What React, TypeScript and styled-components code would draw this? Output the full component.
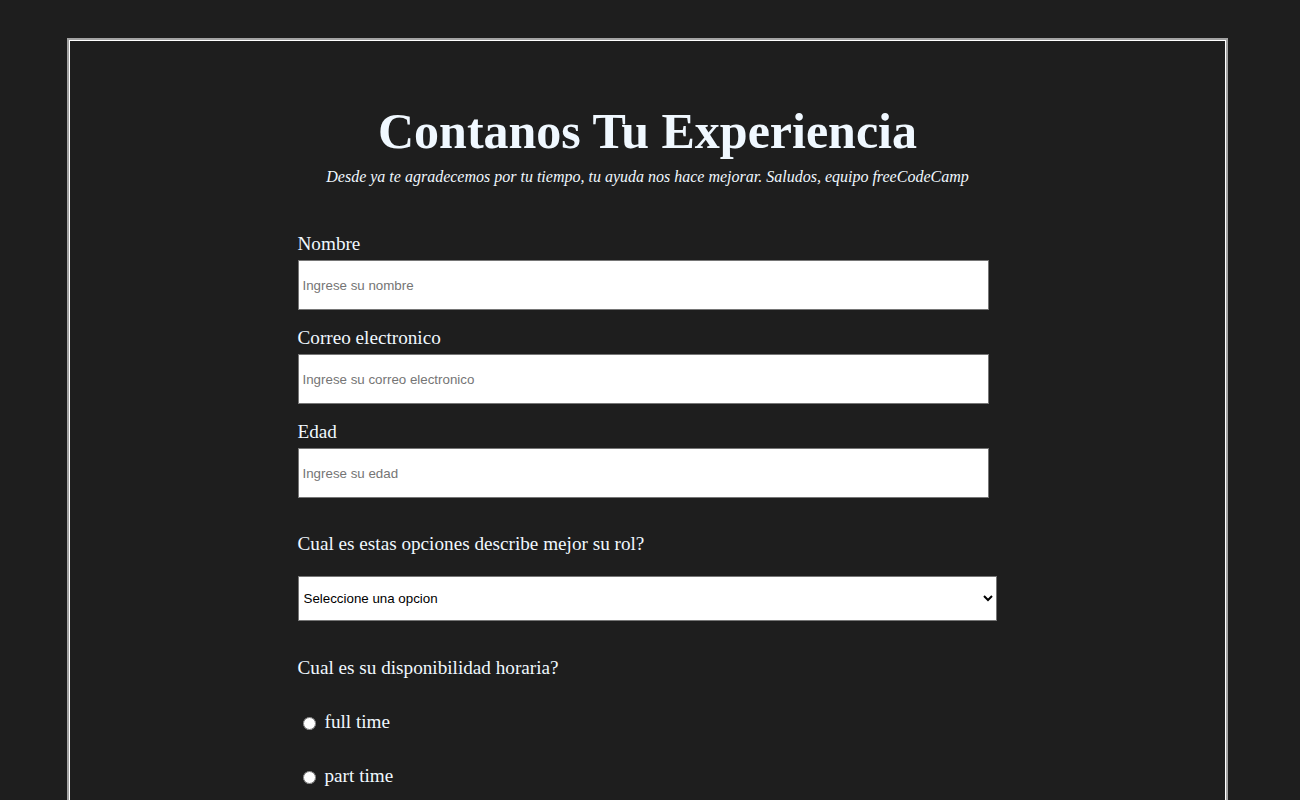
import React from "react";
import styled, { createGlobalStyle } from "styled-components";

const Global = createGlobalStyle`
  html, body { margin: 0; padding: 0; }
  body {
    background: #1e1e1e;
    font-family: "Liberation Serif", "Times New Roman", serif;
    color: #f0f8ff;
  }
`;

const Page = styled.div`
  padding: 38px 72px 40px 67px;
`;

const Frame = styled.main`
  border: 2px solid #a3a3a3;
  box-shadow: inset 0 0 0 1px #ffffff;
  padding: 60px 0 40px;
  display: flex;
  flex-direction: column;
  align-items: center;
`;

const Title = styled.h1`
  margin: 0;
  font-size: 50px;
  font-weight: bold;
  line-height: 62px;
  text-align: center;
`;

const Subtitle = styled.p`
  margin: 6px 0 0;
  font-size: 16px;
  font-style: italic;
  text-align: center;
`;

const Form = styled.form`
  width: 699px;
  margin: 47px 0 0 -1px;
  display: flex;
  flex-direction: column;
`;

const Field = styled.div`
  display: flex;
  flex-direction: column;
  margin-bottom: 17px;
`;

const Label = styled.label`
  font-size: 19.2px;
  line-height: 22px;
  margin-bottom: 5px;
`;

const Input = styled.input`
  box-sizing: border-box;
  width: 691px;
  height: 50px;
  border: 1px solid #767676;
  padding: 0 4px;
  font-family: "Liberation Sans", Arial, sans-serif;
  font-size: 13.33px;
  background: #fff;
  color: #000;
  &::placeholder { color: #757575; }
`;

const Question = styled.p`
  margin: 0;
  font-size: 19.2px;
  line-height: 22px;
`;

const Select = styled.select`
  box-sizing: border-box;
  width: 699px;
  height: 45px;
  border: 1px solid #767676;
  padding: 0 1px;
  font-family: "Liberation Sans", Arial, sans-serif;
  font-size: 13.33px;
  background: #fff;
  color: #000;
`;

const Block = styled.div<{ $top: number; $gap: number }>`
  display: flex;
  flex-direction: column;
  margin-top: ${(p) => p.$top}px;
  gap: ${(p) => p.$gap}px;
`;

const RadioRow = styled.label`
  display: flex;
  align-items: center;
  gap: 9px;
  font-size: 19.2px;
  line-height: 22px;
  padding-left: 5px;
`;

const Radio = styled.input`
  margin: 3px 0 0;
  width: 13px;
  height: 13px;
`;

export default function App() {
  return (
    <>
      <Global />
      <Page>
        <Frame>
          <Title>Contanos Tu Experiencia</Title>
          <Subtitle>
            Desde ya te agradecemos por tu tiempo, tu ayuda nos hace mejorar. Saludos, equipo freeCodeCamp
          </Subtitle>
          <Form>
            <Field>
              <Label htmlFor="name">Nombre</Label>
              <Input id="name" type="text" placeholder="Ingrese su nombre" />
            </Field>
            <Field>
              <Label htmlFor="email">Correo electronico</Label>
              <Input id="email" type="email" placeholder="Ingrese su correo electronico" />
            </Field>
            <Field>
              <Label htmlFor="age">Edad</Label>
              <Input id="age" type="number" placeholder="Ingrese su edad" />
            </Field>
            <Block $top={18} $gap={21}>
              <Question>Cual es estas opciones describe mejor su rol?</Question>
              <Select defaultValue="">
                <option value="" disabled>
                  Seleccione una opcion
                </option>
                <option value="student">Estudiante</option>
                <option value="dev">Desarrollador</option>
                <option value="other">Otro</option>
              </Select>
            </Block>
            <Block $top={36} $gap={32}>
              <Question>Cual es su disponibilidad horaria?</Question>
              <RadioRow>
                <Radio type="radio" name="time" value="full" />
                full time
              </RadioRow>
              <RadioRow>
                <Radio type="radio" name="time" value="part" />
                part time
              </RadioRow>
            </Block>
          </Form>
        </Frame>
      </Page>
    </>
  );
}
